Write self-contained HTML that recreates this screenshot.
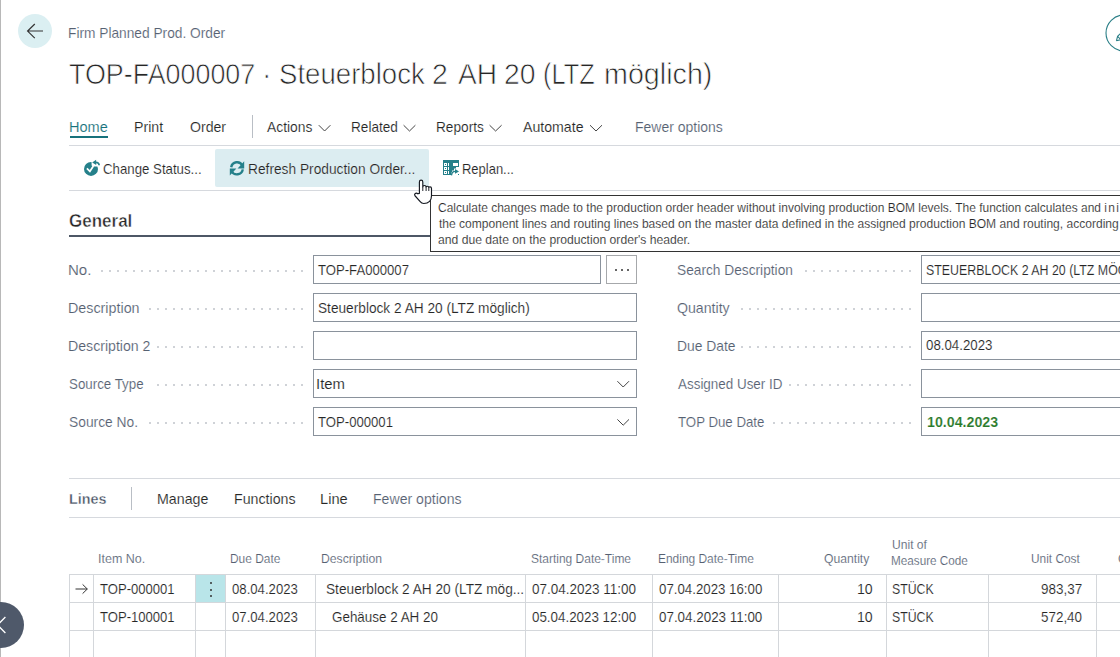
<!DOCTYPE html>
<html><head><meta charset="utf-8"><title>Firm Planned Prod. Order</title>
<style>
html,body{margin:0;padding:0;background:#fff;}
body{width:1120px;height:657px;overflow:hidden;position:relative;font-family:"Liberation Sans", sans-serif;}
.t{position:absolute;white-space:pre;line-height:normal;transform-origin:0 0;-webkit-text-stroke:0.15px #fff;}
.a{position:absolute;box-sizing:border-box;}
</style></head><body>
<!-- left edge line -->
<div class="a" style="left:0;top:0;width:1px;height:657px;background:#b8b8b8"></div>
<!-- back button -->
<svg class="a" style="left:0;top:0" width="70" height="60" viewBox="0 0 70 60">
  <circle cx="35" cy="31" r="17" fill="#dbeff2"/>
  <path d="M27.5 31 H43 M34.8 24 L27.6 31.1 L34.8 38.1" fill="none" stroke="#333" stroke-width="1.2"/>
</svg>
<!-- top right edit circle -->
<svg class="a" style="left:1090px;top:0" width="30" height="60" viewBox="1090 0 30 60">
  <circle cx="1124" cy="33" r="18" fill="#fff" stroke="#2a7f87" stroke-width="1.1"/>
  <path d="M1116.4 40.8 L1117.6 36.4 L1126 28 M1116.4 40.8 L1120.8 39.6 L1129 31.5 M1117.6 36.4 L1120.8 39.6" fill="none" stroke="#2a7f87" stroke-width="1.1"/>
</svg>
<!-- tab separator, underline, lines -->
<div class="a" style="left:252px;top:115px;width:1px;height:23px;background:#b9bec5"></div>
<div class="a" style="left:70px;top:136px;width:38px;height:2px;background:#17727b"></div>
<div class="a" style="left:69px;top:145px;width:1051px;height:1px;background:#d6d9de"></div>
<!-- tab chevrons -->
<svg class="a" style="left:0;top:0" width="620" height="140" viewBox="0 0 620 140">
  <g fill="none" stroke="#444" stroke-width="1">
    <path d="M318.8 125.2 L324.6 131 L330.4 125.2"/>
    <path d="M403.6 125.2 L409.5 131 L415.4 125.2"/>
    <path d="M489.6 125.2 L495.6 131 L501.6 125.2"/>
    <path d="M590 125.2 L596 131 L602 125.2"/>
  </g>
</svg>
<!-- refresh button bg -->
<div class="a" style="left:215px;top:149px;width:214px;height:38px;background:#dcedf1;border-radius:2px"></div>
<div class="a" style="left:69px;top:190px;width:1051px;height:1px;background:#d6d9de"></div>
<!-- action icons -->
<svg class="a" style="left:80px;top:155px" width="24" height="26" viewBox="80 155 24 26">
  <circle cx="91" cy="168.9" r="7" fill="#25808a"/>
  <path d="M91.6 160 L91.6 165.4 L92.9 166.4 L100 166.4 L100 160 Z" fill="#fff"/>
  <path d="M92.2 162.4 L96.1 159.8 L96.2 164.9 Z" fill="#25808a"/>
  <path d="M95.6 162.4 Q99.1 162.3 99.1 165.3" fill="none" stroke="#25808a" stroke-width="1.8"/>
  <path d="M86.9 168.3 L89.9 171.3 L93.4 166" fill="none" stroke="#fff" stroke-width="1.7"/>
</svg>
<svg class="a" style="left:226px;top:157px" width="22" height="22" viewBox="226 157 22 22">
  <g fill="none" stroke="#25808a" stroke-width="2.4">
    <path d="M231.2 167.2 A6 6 0 0 1 242.4 165.4"/>
    <path d="M242.8 169.4 A6 6 0 0 1 231.6 171.2"/>
  </g>
  <path d="M244.2 161.2 L244.2 168.4 L237.6 168.4 Z" fill="#25808a"/>
  <path d="M229.8 175.6 L229.8 168.4 L236.4 168.4 Z" fill="#25808a"/>
</svg>
<svg class="a" style="left:440px;top:157px" width="24" height="22" viewBox="440 157 24 22">
  <rect x="443" y="160" width="16" height="15" fill="#25808a"/>
  <g fill="#fff">
    <path d="M444 163h3v3h-3z M445 164v1h1v-1z M444 167h3v3h-3z M445 168v1h1v-1z M444 171h3v3h-3z M445 172v1h1v-1z" fill-rule="evenodd"/>
    <rect x="448" y="163" width="1" height="3"/><rect x="448" y="167" width="1" height="3"/><rect x="448" y="171" width="1" height="3"/>
    <rect x="453" y="163" width="5" height="3"/>
    <path d="M451 175 V172.4 H452 V170.4 H454 V168.4 H456 V167 H459 V175 Z"/>
  </g>
  <path d="M451.6 175.4 Q451.4 171.4 455.4 171.4" fill="none" stroke="#25808a" stroke-width="1.4"/>
  <path d="M455 169 L459 171.4 L455 173.8 Z" fill="#25808a"/>
  <rect x="458" y="174" width="1" height="1" fill="#25808a"/>
</svg>
<!-- General underline -->
<div class="a" style="left:69px;top:235px;width:400px;height:2px;background:#4d5766"></div>

<div class="a" style="left:430px;top:195px;width:700px;height:57px;background:#fff;border:1px solid #333;border-right:none"></div>
<div class="a" style="left:313px;top:255px;width:288px;height:29px;border:1px solid #8a929c;background:#fff"></div>
<div class="a" style="left:606px;top:255px;width:31px;height:29px;border:1px solid #a6a8ab;background:#fff"></div>
<div class="a" style="left:921px;top:255px;width:220px;height:29px;border:1px solid #8a929c;background:#fff"></div>
<div class="a" style="left:313px;top:293px;width:324px;height:29px;border:1px solid #8a929c;background:#fff"></div>
<div class="a" style="left:921px;top:293px;width:220px;height:29px;border:1px solid #8a929c;background:#fff"></div>
<div class="a" style="left:313px;top:331px;width:324px;height:29px;border:1px solid #8a929c;background:#fff"></div>
<div class="a" style="left:921px;top:331px;width:220px;height:29px;border:1px solid #8a929c;background:#fff"></div>
<div class="a" style="left:313px;top:369px;width:324px;height:29px;border:1px solid #8a929c;background:#fff"></div>
<div class="a" style="left:921px;top:369px;width:220px;height:29px;border:1px solid #8a929c;background:#fff"></div>
<div class="a" style="left:313px;top:407px;width:324px;height:29px;border:1px solid #8a929c;background:#fff"></div>
<div class="a" style="left:921px;top:407px;width:220px;height:29px;border:1px solid #8a929c;background:#fff"></div>
<div class="a" style="left:615px;top:269px;width:2px;height:2px;background:#333;border-radius:1px"></div>
<div class="a" style="left:621px;top:269px;width:2px;height:2px;background:#333;border-radius:1px"></div>
<div class="a" style="left:627px;top:269px;width:2px;height:2px;background:#333;border-radius:1px"></div>
<svg class="a" style="left:610px;top:375px" width="26" height="56" viewBox="610 375 26 56"><g fill="none" stroke="#444" stroke-width="1"><path d="M617.4 381.2 L623.2 387 L629 381.2"/><path d="M617.4 419.4 L623.2 425.2 L629 419.4"/></g></svg>
<div class="a" style="left:101px;top:270px;width:202px;height:2px;background:linear-gradient(90deg,#cfd2d7 2px,transparent 2px) 0 0/8px 2px repeat-x"></div>
<div class="a" style="left:149px;top:308px;width:154px;height:2px;background:linear-gradient(90deg,#cfd2d7 2px,transparent 2px) 0 0/8px 2px repeat-x"></div>
<div class="a" style="left:157px;top:346px;width:146px;height:2px;background:linear-gradient(90deg,#cfd2d7 2px,transparent 2px) 0 0/8px 2px repeat-x"></div>
<div class="a" style="left:157px;top:384px;width:146px;height:2px;background:linear-gradient(90deg,#cfd2d7 2px,transparent 2px) 0 0/8px 2px repeat-x"></div>
<div class="a" style="left:149px;top:422px;width:154px;height:2px;background:linear-gradient(90deg,#cfd2d7 2px,transparent 2px) 0 0/8px 2px repeat-x"></div>
<div class="a" style="left:805px;top:270px;width:106px;height:2px;background:linear-gradient(90deg,#cfd2d7 2px,transparent 2px) 0 0/8px 2px repeat-x"></div>
<div class="a" style="left:741px;top:308px;width:170px;height:2px;background:linear-gradient(90deg,#cfd2d7 2px,transparent 2px) 0 0/8px 2px repeat-x"></div>
<div class="a" style="left:741px;top:346px;width:170px;height:2px;background:linear-gradient(90deg,#cfd2d7 2px,transparent 2px) 0 0/8px 2px repeat-x"></div>
<div class="a" style="left:789px;top:384px;width:122px;height:2px;background:linear-gradient(90deg,#cfd2d7 2px,transparent 2px) 0 0/8px 2px repeat-x"></div>
<div class="a" style="left:773px;top:422px;width:138px;height:2px;background:linear-gradient(90deg,#cfd2d7 2px,transparent 2px) 0 0/8px 2px repeat-x"></div>
<div class="a" style="left:69px;top:478px;width:1051px;height:1px;background:#d6d9de"></div>
<div class="a" style="left:131px;top:487px;width:1px;height:23px;background:#b9bec5"></div>
<div class="a" style="left:69px;top:517px;width:1051px;height:1px;background:#d6d9de"></div>
<div class="a" style="left:196px;top:575px;width:29px;height:27px;background:#b9e5e9"></div>
<div class="a" style="left:69px;top:574px;width:1051px;height:1px;background:#d4d7db"></div>
<div class="a" style="left:69px;top:602px;width:1051px;height:1px;background:#d4d7db"></div>
<div class="a" style="left:69px;top:630px;width:1051px;height:1px;background:#d4d7db"></div>
<div class="a" style="left:69px;top:574px;width:1px;height:83px;background:#d4d7db"></div>
<div class="a" style="left:93px;top:574px;width:1px;height:83px;background:#d4d7db"></div>
<div class="a" style="left:195px;top:574px;width:1px;height:83px;background:#d4d7db"></div>
<div class="a" style="left:225px;top:574px;width:1px;height:83px;background:#d4d7db"></div>
<div class="a" style="left:315px;top:574px;width:1px;height:83px;background:#d4d7db"></div>
<div class="a" style="left:525px;top:574px;width:1px;height:83px;background:#d4d7db"></div>
<div class="a" style="left:652px;top:574px;width:1px;height:83px;background:#d4d7db"></div>
<div class="a" style="left:778px;top:574px;width:1px;height:83px;background:#d4d7db"></div>
<div class="a" style="left:886px;top:574px;width:1px;height:83px;background:#d4d7db"></div>
<div class="a" style="left:988px;top:574px;width:1px;height:83px;background:#d4d7db"></div>
<div class="a" style="left:1096px;top:574px;width:1px;height:83px;background:#d4d7db"></div>
<div class="a" style="left:210px;top:582px;width:2px;height:2px;background:#333;border-radius:1px"></div>
<div class="a" style="left:210px;top:589px;width:2px;height:2px;background:#333;border-radius:1px"></div>
<div class="a" style="left:210px;top:595px;width:2px;height:2px;background:#333;border-radius:1px"></div>
<svg class="a" style="left:72px;top:582px" width="20" height="14" viewBox="72 582 20 14"><path d="M75.5 589 H87.3 M82.6 584.4 L87.3 589 L82.6 593.6" fill="none" stroke="#333" stroke-width="1"/></svg>
<svg class="a" style="left:0;top:598px" width="30" height="55" viewBox="0 598 30 55"><circle cx="1" cy="625" r="23" fill="#4f596a"/><path d="M5.4 617 L-2.5 625 L5.4 633" fill="none" stroke="#fff" stroke-width="1.3"/></svg>
<svg class="a" style="left:410px;top:176px" width="26" height="30" viewBox="410 176 26 30">
<path d="M419.4 193.4 L419.4 182 Q419.4 180.1 421.1 180.1 Q422.8 180.1 422.8 182 L422.8 186.8 Q423 185.5 424.5 185.5 Q426 185.5 426.1 186.9 Q426.3 186.2 427.4 186.2 Q428.6 186.2 428.8 187.4 Q429 186.9 430.1 186.9 Q431.5 186.9 431.5 188.6 L431.5 195.8 Q431.5 199.6 429.6 201.4 Q427.4 203.5 423.8 203.5 Q421.6 203.5 420.2 201.6 L415.2 196 Q414 194.6 415 193.7 Q416.4 192.6 417.9 193.8 Z" fill="#fff" stroke="#141820" stroke-width="1.15" stroke-linejoin="round"/>
<path d="M422.8 186.8 L422.8 191 M426.1 186.9 L426.1 191 M428.8 187.4 L428.8 191" stroke="#141820" stroke-width="0.95"/>
</svg>
<div class='t' style='left:68.20px;top:25px;font-size:14.5px;font-weight:400;color:#566172;transform:scaleX(0.9468);'>Firm Planned Prod. Order</div>
<div class='t' style='left:68.96px;top:56px;font-size:30.4px;font-weight:400;color:#262626;transform:scaleX(0.8842);-webkit-text-stroke:0.75px #fff'>TOP-FA000007</div>
<div class='t' style='left:262.49px;top:56px;font-size:30.4px;font-weight:400;color:#262626;transform:scaleX(0.93);-webkit-text-stroke:0.75px #fff'>·</div>
<div class='t' style='left:278.50px;top:56px;font-size:30.4px;font-weight:400;color:#262626;transform:scaleX(0.9084);-webkit-text-stroke:0.75px #fff'>Steuerblock</div>
<div class='t' style='left:432.48px;top:56px;font-size:30.4px;font-weight:400;color:#262626;transform:scaleX(0.9368);-webkit-text-stroke:0.75px #fff'>2</div>
<div class='t' style='left:457.70px;top:56px;font-size:30.4px;font-weight:400;color:#262626;transform:scaleX(0.9242);-webkit-text-stroke:0.75px #fff'>AH</div>
<div class='t' style='left:503.98px;top:56px;font-size:30.4px;font-weight:400;color:#262626;transform:scaleX(0.9328);-webkit-text-stroke:0.75px #fff'>20</div>
<div class='t' style='left:543.48px;top:56px;font-size:30.4px;font-weight:400;color:#262626;transform:scaleX(0.8343);-webkit-text-stroke:0.75px #fff'>(LTZ</div>
<div class='t' style='left:603.68px;top:56px;font-size:30.4px;font-weight:400;color:#262626;transform:scaleX(0.944);-webkit-text-stroke:0.75px #fff'>möglich)</div>
<div class='t' style='left:69.04px;top:119px;font-size:14.5px;font-weight:400;color:#17727b;transform:scaleX(1.0029);'>Home</div>
<div class='t' style='left:133.87px;top:119px;font-size:14.5px;font-weight:400;color:#262626;transform:scaleX(0.9761);'>Print</div>
<div class='t' style='left:190.14px;top:119px;font-size:14.5px;font-weight:400;color:#262626;transform:scaleX(0.9726);'>Order</div>
<div class='t' style='left:267.00px;top:119px;font-size:14.5px;font-weight:400;color:#262626;transform:scaleX(0.9551);'>Actions</div>
<div class='t' style='left:350.71px;top:119px;font-size:14.5px;font-weight:400;color:#262626;transform:scaleX(0.9374);'>Related</div>
<div class='t' style='left:435.61px;top:119px;font-size:14.5px;font-weight:400;color:#262626;transform:scaleX(0.9415);'>Reports</div>
<div class='t' style='left:523.20px;top:119px;font-size:14.5px;font-weight:400;color:#262626;transform:scaleX(0.975);'>Automate</div>
<div class='t' style='left:634.58px;top:119px;font-size:14.5px;font-weight:400;color:#566172;transform:scaleX(0.9645);'>Fewer options</div>
<div class='t' style='left:102.74px;top:161px;font-size:14.5px;font-weight:400;color:#262626;transform:scaleX(0.9131);'>Change Status...</div>
<div class='t' style='left:248.15px;top:161px;font-size:14.5px;font-weight:400;color:#262626;transform:scaleX(0.9479);'>Refresh Production Order...</div>
<div class='t' style='left:462.21px;top:161px;font-size:14.5px;font-weight:400;color:#262626;transform:scaleX(0.8948);'>Replan...</div>
<div class='t' style='left:68.62px;top:211px;font-size:18.0px;font-weight:700;color:#262626;transform:scaleX(0.9448);-webkit-text-stroke:0.45px #fff'>General</div>
<div class='t' style='left:438.15px;top:201px;font-size:12.3px;font-weight:400;color:#262626;transform:scaleX(0.9731);'>Calculate changes made to the production order header without involving production BOM levels. The function calculates and <span style="letter-spacing:1.4px">ini</span><span style="letter-spacing:0">tializes</span></div>
<div class='t' style='left:438.63px;top:217px;font-size:12.3px;font-weight:400;color:#262626;transform:scaleX(0.9796);'>the component lines and routing lines based on the master data defined in the assigned production BOM and routing, according</div>
<div class='t' style='left:438.26px;top:233px;font-size:12.3px;font-weight:400;color:#262626;transform:scaleX(0.988);'>and due date on the production order's header.</div>
<div class='t' style='left:68.10px;top:262px;font-size:14.5px;font-weight:400;color:#566172;transform:scaleX(1.0382);'>No.</div>
<div class='t' style='left:68.16px;top:300px;font-size:14.5px;font-weight:400;color:#566172;transform:scaleX(0.9865);'>Description</div>
<div class='t' style='left:68.17px;top:338px;font-size:14.5px;font-weight:400;color:#566172;transform:scaleX(0.9747);'>Description 2</div>
<div class='t' style='left:68.77px;top:376px;font-size:14.5px;font-weight:400;color:#566172;transform:scaleX(0.919);'>Source Type</div>
<div class='t' style='left:68.75px;top:414px;font-size:14.5px;font-weight:400;color:#566172;transform:scaleX(0.9522);'>Source No.</div>
<div class='t' style='left:677.35px;top:262px;font-size:14.5px;font-weight:400;color:#566172;transform:scaleX(0.9463);'>Search Description</div>
<div class='t' style='left:677.33px;top:300px;font-size:14.5px;font-weight:400;color:#566172;transform:scaleX(0.9753);'>Quantity</div>
<div class='t' style='left:676.79px;top:338px;font-size:14.5px;font-weight:400;color:#566172;transform:scaleX(0.9551);'>Due Date</div>
<div class='t' style='left:677.90px;top:376px;font-size:14.5px;font-weight:400;color:#566172;transform:scaleX(0.9259);'>Assigned User ID</div>
<div class='t' style='left:677.64px;top:414px;font-size:14.5px;font-weight:400;color:#566172;transform:scaleX(0.9137);'>TOP Due Date</div>
<div class='t' style='left:318.14px;top:262px;font-size:14.5px;font-weight:400;color:#262626;transform:scaleX(0.9053);'>TOP-FA000007</div>
<div class='t' style='left:317.85px;top:300px;font-size:14.5px;font-weight:400;color:#262626;transform:scaleX(0.9428);'>Steuerblock 2 AH 20 (LTZ möglich)</div>
<div class='t' style='left:316.26px;top:376px;font-size:14.5px;font-weight:400;color:#262626;transform:scaleX(1.0277);'>Item</div>
<div class='t' style='left:318.14px;top:414px;font-size:14.5px;font-weight:400;color:#262626;transform:scaleX(0.9059);'>TOP-000001</div>
<div class='t' style='left:926.20px;top:262px;font-size:14.5px;font-weight:400;color:#262626;transform:scaleX(0.8541);'>STEUERBLOCK 2 AH 20 (LTZ MÖGLICH)</div>
<div class='t' style='left:926.00px;top:337px;font-size:14.5px;font-weight:400;color:#262626;transform:scaleX(0.9161);'>08.04.2023</div>
<div class='t' style='left:926.75px;top:414px;font-size:14.5px;font-weight:700;color:#2a7a2a;transform:scaleX(0.9807);'>10.04.2023</div>
<div class='t' style='left:68.64px;top:491px;font-size:14.5px;font-weight:700;color:#465163;transform:scaleX(0.9869);-webkit-text-stroke:0.35px #fff'>Lines</div>
<div class='t' style='left:157.06px;top:491px;font-size:14.5px;font-weight:400;color:#262626;transform:scaleX(0.98);'>Manage</div>
<div class='t' style='left:233.86px;top:491px;font-size:14.5px;font-weight:400;color:#262626;transform:scaleX(0.9793);'>Functions</div>
<div class='t' style='left:319.83px;top:491px;font-size:14.5px;font-weight:400;color:#262626;transform:scaleX(1.0105);'>Line</div>
<div class='t' style='left:372.87px;top:491px;font-size:14.5px;font-weight:400;color:#566172;transform:scaleX(0.9723);'>Fewer options</div>
<div class='t' style='left:98.18px;top:551px;font-size:13.0px;font-weight:400;color:#566172;transform:scaleX(0.9613);'>Item No.</div>
<div class='t' style='left:230.45px;top:551px;font-size:13.0px;font-weight:400;color:#566172;transform:scaleX(0.9174);'>Due Date</div>
<div class='t' style='left:320.92px;top:551px;font-size:13.0px;font-weight:400;color:#566172;transform:scaleX(0.9383);'>Description</div>
<div class='t' style='left:531.42px;top:551px;font-size:13.0px;font-weight:400;color:#566172;transform:scaleX(0.9208);'>Starting Date-Time</div>
<div class='t' style='left:657.64px;top:551px;font-size:13.0px;font-weight:400;color:#566172;transform:scaleX(0.9185);'>Ending Date-Time</div>
<div class='t' style='left:824.01px;top:551px;font-size:13.0px;font-weight:400;color:#566172;transform:scaleX(0.9354);'>Quantity</div>
<div class='t' style='left:891.55px;top:537px;font-size:13.0px;font-weight:400;color:#566172;transform:scaleX(0.93);'>Unit of</div>
<div class='t' style='left:891.46px;top:553px;font-size:13.0px;font-weight:400;color:#566172;transform:scaleX(0.9014);'>Measure Code</div>
<div class='t' style='left:1030.87px;top:551px;font-size:13.0px;font-weight:400;color:#566172;transform:scaleX(0.9129);'>Unit Cost</div>
<div class='t' style='left:1117.90px;top:551px;font-size:13.0px;font-weight:400;color:#566172;transform:scaleX(0.93);'>Cost Amount</div>
<div class='t' style='left:100.49px;top:581px;font-size:14.5px;font-weight:400;color:#262626;transform:scaleX(0.9016);'>TOP-000001</div>
<div class='t' style='left:232.11px;top:581px;font-size:14.5px;font-weight:400;color:#262626;transform:scaleX(0.9077);'>08.04.2023</div>
<div class='t' style='left:325.70px;top:581px;font-size:14.5px;font-weight:400;color:#262626;transform:scaleX(0.9432);'>Steuerblock 2 AH 20 (LTZ mög...</div>
<div class='t' style='left:532.40px;top:581px;font-size:14.5px;font-weight:400;color:#262626;transform:scaleX(0.931);'>07.04.2023 11:00</div>
<div class='t' style='left:658.60px;top:581px;font-size:14.5px;font-weight:400;color:#262626;transform:scaleX(0.9149);'>07.04.2023 16:00</div>
<div class='t' style='left:856.51px;top:581px;font-size:14.5px;font-weight:400;color:#262626;transform:scaleX(0.9733);'>10</div>
<div class='t' style='left:892.41px;top:581px;font-size:14.5px;font-weight:400;color:#262626;transform:scaleX(0.8481);'>STÜCK</div>
<div class='t' style='left:1041.26px;top:581px;font-size:14.5px;font-weight:400;color:#262626;transform:scaleX(0.9281);'>983,37</div>
<div class='t' style='left:100.49px;top:609px;font-size:14.5px;font-weight:400;color:#262626;transform:scaleX(0.9016);'>TOP-100001</div>
<div class='t' style='left:232.11px;top:609px;font-size:14.5px;font-weight:400;color:#262626;transform:scaleX(0.9077);'>07.04.2023</div>
<div class='t' style='left:331.83px;top:609px;font-size:14.5px;font-weight:400;color:#262626;transform:scaleX(0.9253);'>Gehäuse 2 AH 20</div>
<div class='t' style='left:532.40px;top:609px;font-size:14.5px;font-weight:400;color:#262626;transform:scaleX(0.922);'>05.04.2023 12:00</div>
<div class='t' style='left:658.60px;top:609px;font-size:14.5px;font-weight:400;color:#262626;transform:scaleX(0.9238);'>07.04.2023 11:00</div>
<div class='t' style='left:856.51px;top:609px;font-size:14.5px;font-weight:400;color:#262626;transform:scaleX(0.9733);'>10</div>
<div class='t' style='left:892.41px;top:609px;font-size:14.5px;font-weight:400;color:#262626;transform:scaleX(0.8481);'>STÜCK</div>
<div class='t' style='left:1041.26px;top:609px;font-size:14.5px;font-weight:400;color:#262626;transform:scaleX(0.925);'>572,40</div>
</body></html>
